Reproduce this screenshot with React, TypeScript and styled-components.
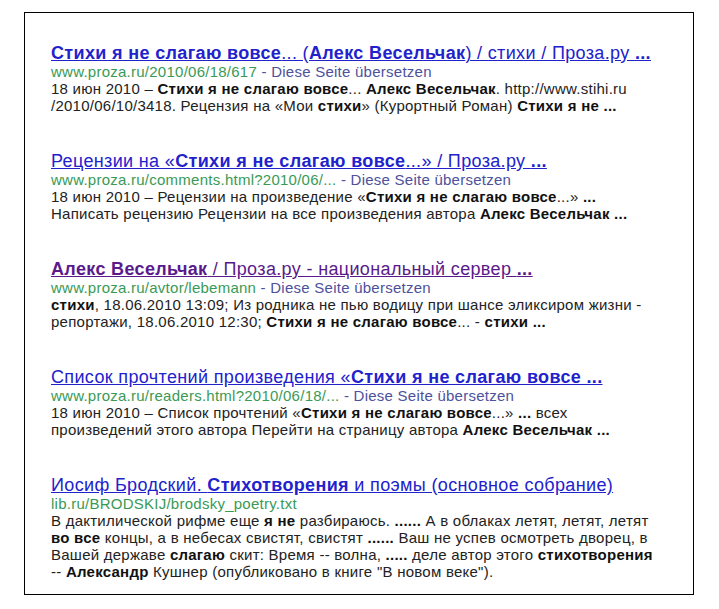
import styled, { createGlobalStyle } from "styled-components";

const GlobalStyle = createGlobalStyle`
  html, body {
    margin: 0;
    padding: 0;
    background: #ffffff;
  }
  body {
    font-family: "Liberation Sans", Arial, sans-serif;
  }
`;

type Part = { t: string; b?: boolean };

type Result = {
  title: Part[];
  visited?: boolean;
  url: string;
  translate?: boolean;
  lines: Part[][];
};

const results: Result[] = [
  {
    title: [
      { t: "Стихи я не слагаю вовсе", b: true },
      { t: "... (" },
      { t: "Алекс Весельчак", b: true },
      { t: ") / стихи / Проза.ру " },
      { t: "...", b: true },
    ],
    url: "www.proza.ru/2010/06/18/617",
    translate: true,
    lines: [
      [
        { t: "18 июн 2010 – " },
        { t: "Стихи я не слагаю вовсе", b: true },
        { t: "... " },
        { t: "Алекс Весельчак", b: true },
        { t: ". http://www.stihi.ru" },
      ],
      [
        { t: "/2010/06/10/3418. Рецензия на «Мои " },
        { t: "стихи", b: true },
        { t: "» (Курортный Роман) " },
        { t: "Стихи я не ...", b: true },
      ],
    ],
  },
  {
    title: [
      { t: "Рецензии на «" },
      { t: "Стихи я не слагаю вовсе", b: true },
      { t: "...» / Проза.ру " },
      { t: "...", b: true },
    ],
    url: "www.proza.ru/comments.html?2010/06/...",
    translate: true,
    lines: [
      [
        { t: "18 июн 2010 – Рецензии на произведение «" },
        { t: "Стихи я не слагаю вовсе", b: true },
        { t: "...» " },
        { t: "...", b: true },
      ],
      [
        { t: "Написать рецензию Рецензии на все произведения автора " },
        { t: "Алекс Весельчак ...", b: true },
      ],
    ],
  },
  {
    title: [
      { t: "Алекс Весельчак", b: true },
      { t: " / Проза.ру - национальный сервер " },
      { t: "...", b: true },
    ],
    visited: true,
    url: "www.proza.ru/avtor/lebemann",
    translate: true,
    lines: [
      [
        { t: "стихи", b: true },
        { t: ", 18.06.2010 13:09; Из родника не пью водицу при шансе эликсиром жизни -" },
      ],
      [
        { t: "репортажи, 18.06.2010 12:30; " },
        { t: "Стихи я не слагаю вовсе", b: true },
        { t: "... - " },
        { t: "стихи ...", b: true },
      ],
    ],
  },
  {
    title: [
      { t: "Список прочтений произведения «" },
      { t: "Стихи я не слагаю вовсе ...", b: true },
    ],
    url: "www.proza.ru/readers.html?2010/06/18/...",
    translate: true,
    lines: [
      [
        { t: "18 июн 2010 – Список прочтений «" },
        { t: "Стихи я не слагаю вовсе", b: true },
        { t: "...» " },
        { t: "...", b: true },
        { t: " всех" },
      ],
      [
        { t: "произведений этого автора Перейти на страницу автора " },
        { t: "Алекс Весельчак ...", b: true },
      ],
    ],
  },
  {
    title: [
      { t: "Иосиф Бродский. " },
      { t: "Стихотворения", b: true },
      { t: " и поэмы (основное собрание)" },
    ],
    url: "lib.ru/BRODSKIJ/brodsky_poetry.txt",
    lines: [
      [
        { t: "В дактилической рифме еще " },
        { t: "я не", b: true },
        { t: " разбираюсь. " },
        { t: "......", b: true },
        { t: " А в облаках летят, летят, летят" },
      ],
      [
        { t: "во все", b: true },
        { t: " концы, а в небесах свистят, свистят " },
        { t: "......", b: true },
        { t: " Ваш не успев осмотреть дворец, в" },
      ],
      [
        { t: "Вашей державе " },
        { t: "слагаю", b: true },
        { t: " скит: Время -- волна, " },
        { t: ".....", b: true },
        { t: " деле автор этого " },
        { t: "стихотворения", b: true },
      ],
      [
        { t: "-- " },
        { t: "Александр", b: true },
        { t: ' Кушнер (опубликовано в книге "В новом веке").' },
      ],
    ],
  },
];

const Page = styled.div`
  padding: 12px 0 0 24px;
`;

const Frame = styled.div`
  box-sizing: border-box;
  width: 670px;
  height: 583px;
  border: 1px solid #000000;
  padding: 30px 0 0 26px;
  display: flex;
  flex-direction: column;
  gap: 37px;
`;

const Item = styled.div`
  display: flex;
  flex-direction: column;
`;

const Title = styled.a<{ $visited?: boolean }>`
  font-size: 18px;
  line-height: 20px;
  letter-spacing: 0.35px;
  color: ${(p) => (p.$visited ? "#5a1a8b" : "#2222cc")};
  text-decoration: underline;
  white-space: nowrap;
  cursor: pointer;
`;

const Url = styled.div`
  font-size: 15px;
  line-height: 16px;
  letter-spacing: 0.25px;
  white-space: nowrap;
  margin-top: 1px;
`;

const Green = styled.span`
  color: #3a9a55;
`;

const Translate = styled.span`
  color: #4d519c;
`;

const Snippet = styled.div`
  font-size: 15px;
  line-height: 17px;
  letter-spacing: 0.25px;
  color: #222222;
  white-space: nowrap;
`;

const Strong = styled.b`
  font-weight: bold;
  color: #111111;
`;

const renderParts = (parts: Part[]) =>
  parts.map((p, i) => (p.b ? <Strong key={i}>{p.t}</Strong> : <span key={i}>{p.t}</span>));

const App = () => {
  return (
    <Page>
      <GlobalStyle />
      <Frame>
        {results.map((r, i) => (
          <Item key={i}>
            <Title $visited={r.visited}>
              {r.title.map((p, j) => (p.b ? <b key={j}>{p.t}</b> : <span key={j}>{p.t}</span>))}
            </Title>
            <Url>
              <Green>{r.url}</Green>
              {r.translate && <Translate> - Diese Seite übersetzen</Translate>}
            </Url>
            {r.lines.map((line, j) => (
              <Snippet key={j}>{renderParts(line)}</Snippet>
            ))}
          </Item>
        ))}
      </Frame>
    </Page>
  );
};

export default App;
